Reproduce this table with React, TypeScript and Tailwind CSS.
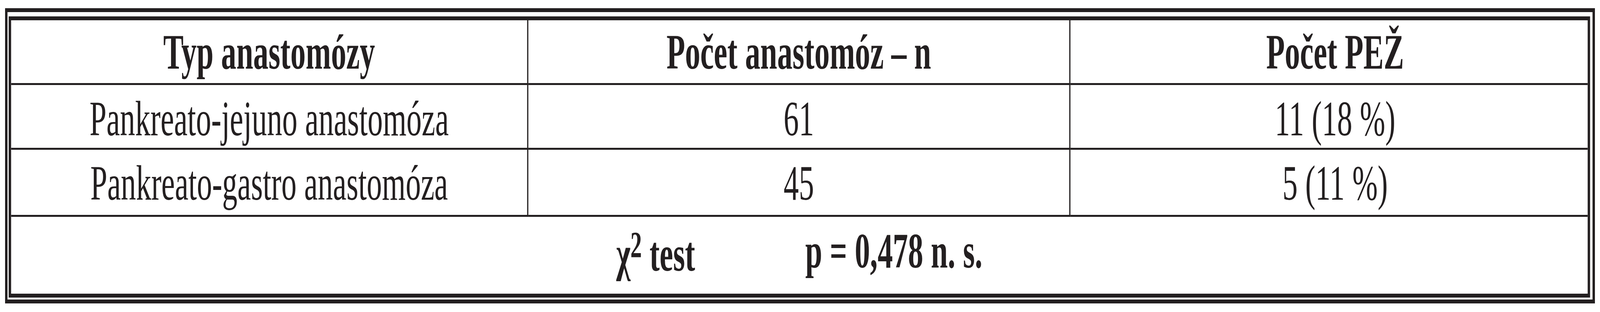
import { Fragment, useEffect, useState } from "react"

const serif = "font-['Liberation_Serif','Times_New_Roman',serif]"

const rows = [
  { name: "Pankreato-jejuno anastomóza", count: "61", pez: "11 (18 %)", h: "h-[166px]", pt: "pt-[24px]" },
  { name: "Pankreato-gastro anastomóza", count: "45", pez: "5 (11 %)", h: "h-[172px]", pt: "pt-[23px]" },
]

// the table is drawn for a 6623px wide page; narrower windows squeeze it sideways
function usePageScale() {
  const [k, setK] = useState(1)
  useEffect(() => {
    const update = () => setK(Math.min(1, window.innerWidth / 6623))
    update()
    window.addEventListener("resize", update)
    return () => window.removeEventListener("resize", update)
  }, [])
  return k
}

export default function App() {
  const k = usePageScale()

  return (
    <div className="w-full h-[800px] overflow-hidden bg-white">
      <div
        className={`w-[6623px] h-[800px] origin-top-left text-[#231f20] ${serif} pt-[21px] pl-[21px]`}
        style={{ transform: `scaleX(${k})` }}
      >
        {/* double frame */}
        <div className="box-border w-[6581px] border-[10px] border-[#231f20] pl-[5px] pr-[10px] pt-[11px] pb-[5px]">
          <div className="border-[10px] border-[#231f20]">
            <div className="grid grid-cols-[2141px_2244px_1fr] text-[126px] leading-none whitespace-nowrap">
              {/* header */}
              <div className="box-border h-[166px] border-r-[5px] border-b-[5px] border-[#231f20] flex justify-center pt-[19px] font-bold">
                Typ anastomózy
              </div>
              <div className="box-border h-[166px] border-r-[5px] border-b-[5px] border-[#231f20] flex justify-center pt-[19px] font-bold">
                Počet anastomóz – n
              </div>
              <div className="box-border h-[166px] border-b-[5px] border-[#231f20] flex justify-center pt-[19px] pl-[50px] font-bold">
                Počet PEŽ
              </div>

              {rows.map((r) => (
                <Fragment key={r.name}>
                  <div className={`box-border ${r.h} border-r-[5px] border-b-[5px] border-[#231f20] flex justify-center ${r.pt}`}>
                    {r.name}
                  </div>
                  <div className={`box-border ${r.h} border-r-[5px] border-b-[5px] border-[#231f20] flex justify-center ${r.pt}`}>
                    {r.count}
                  </div>
                  <div className={`box-border ${r.h} border-b-[5px] border-[#231f20] flex justify-center pl-[50px] ${r.pt}`}>
                    {r.pez}
                  </div>
                </Fragment>
              ))}

              {/* test result, spans all columns */}
              <div className="col-span-3 h-[197px] flex justify-center gap-[456px] pt-[25px] font-bold">
                <span className="whitespace-pre">
                  χ<span className="text-[95px] align-[34px] leading-none">2</span> test
                </span>
                <span className="whitespace-pre">p = 0,478 n. s.</span>
              </div>
            </div>
          </div>
        </div>
      </div>
    </div>
  )
}
